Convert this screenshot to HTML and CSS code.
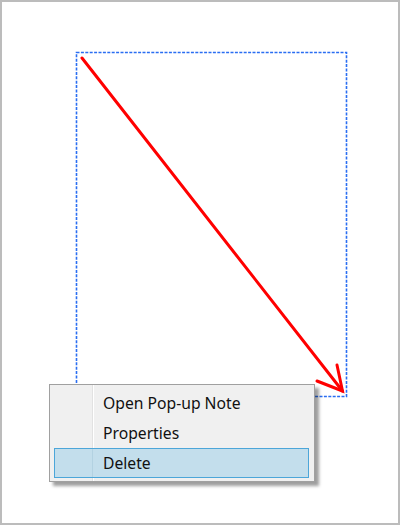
FILE: index.html
```html
<!DOCTYPE html>
<html>
<head>
<meta charset="utf-8">
<link rel="stylesheet" href="styles.css">
</head>
<body>
<div class="frame">
  <svg class="canvas" width="400" height="525" viewBox="0 0 400 525">
    <rect x="76.5" y="52.5" width="270" height="344" fill="none" stroke="#2a6ef2" stroke-width="1.6" stroke-dasharray="3 1.4"/>
    <g stroke="#ff0000" stroke-width="3" stroke-linecap="round" fill="none">
      <line x1="82" y1="58" x2="342.5" y2="391"/>
      <polyline points="317,381 342.5,391 337,365"/>
    </g>
  </svg>
  <div class="menu">
    <div class="item">Open Pop-up Note</div>
    <div class="item">Properties</div>
    <div class="item active">Delete</div>
  </div>
</div>
</body>
</html>
```
FILE: styles.css
```css
html, body {
  margin: 0;
  padding: 0;
  background: #ffffff;
}
.frame {
  position: relative;
  width: 400px;
  height: 525px;
  box-sizing: border-box;
  background: #ffffff;
  box-shadow: inset 0 0 0 2px #bcbcbc;
  overflow: hidden;
}
.canvas {
  position: absolute;
  left: 0;
  top: 0;
}
.menu {
  position: absolute;
  left: 49px;
  top: 384px;
  width: 266px;
  box-sizing: border-box;
  border: 1px solid #a0a0a0;
  padding: 3px 5px 3px 4px;
  background: linear-gradient(to right, #f0f0f0 42px, #e2e2e2 42px, #e2e2e2 43px, #ffffff 43px, #ffffff 44px, #f0f0f0 44px);
  box-shadow: 4px 4px 3px rgba(0, 0, 0, 0.38);
  font-family: "Noto Sans", "Open Sans", sans-serif;
  font-size: 15.7px;
  color: #111;
}
.item {
  height: 30px;
  box-sizing: border-box;
  padding-left: 48px;
  line-height: 28px;
  border: 1px solid transparent;
}
.item.active {
  background: linear-gradient(to right, #c3deec 37px, #b3d2e2 37px, #b3d2e2 38px, #c3deec 38px);
  border-color: #4ca6d9;
}
```
